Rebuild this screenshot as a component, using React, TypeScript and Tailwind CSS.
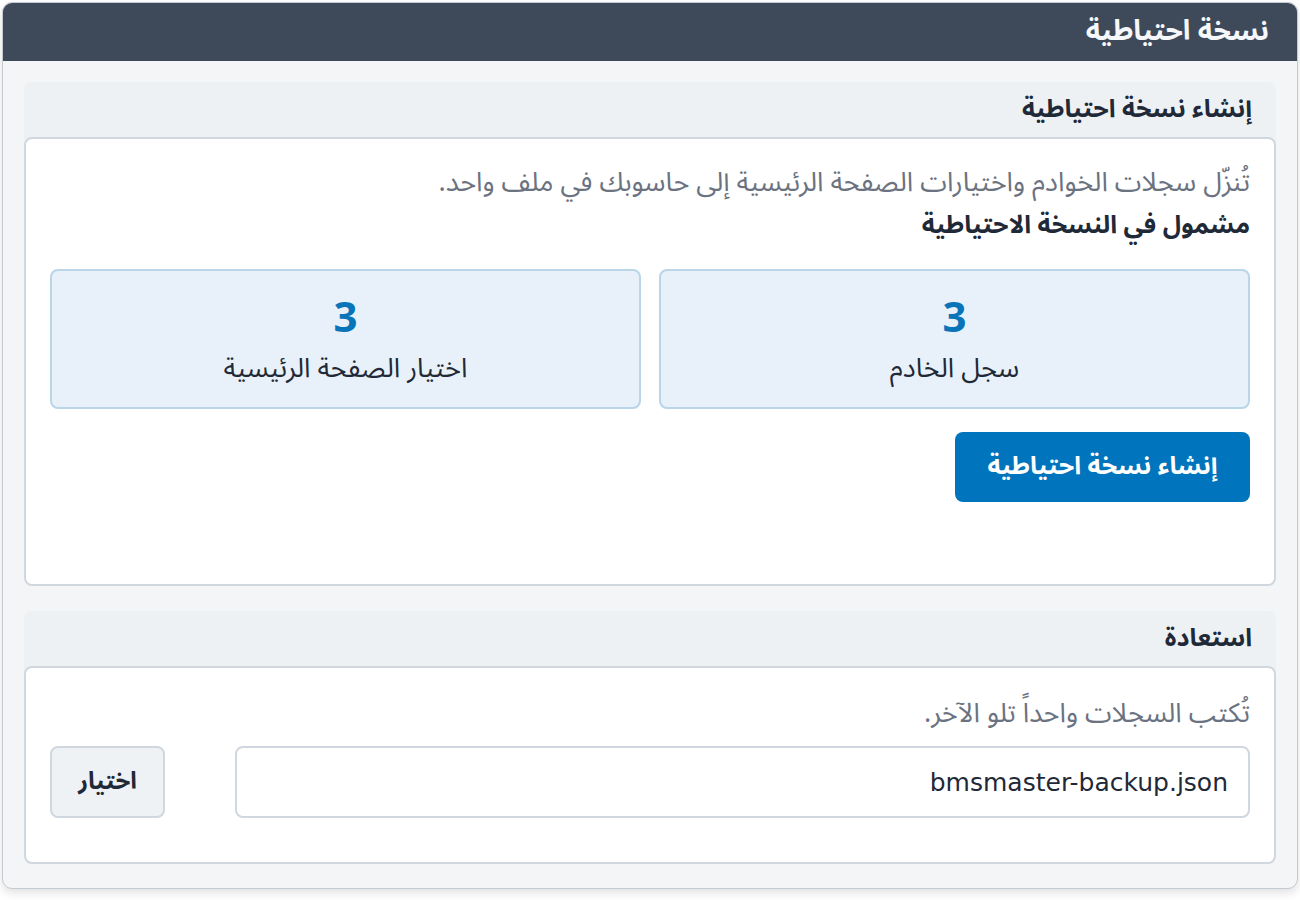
import React from "react";

const font = { fontFamily: '"Noto Sans Arabic", "DejaVu Sans", "Noto Sans", sans-serif' };

function StatCard({ value, label }: { value: number; label: string }) {
  return (
    <div className="flex h-[140px] flex-1 flex-col items-center justify-center rounded-[8px] border-2 border-[#b9d5e8] bg-[#e8f1f9]">
      <div className="mt-[4px] text-[42px] font-bold leading-[50px] text-[#0a74b9]">{value}</div>
      <div className="mt-[6px] text-[27px] leading-[38px] text-[#1f2937]">{label}</div>
    </div>
  );
}

function Section({ title, children, bodyClass }: { title: string; children: React.ReactNode; bodyClass: string }) {
  return (
    <section className="rounded-[8px] bg-[#edf1f4]">
      <div className="flex h-[55px] items-center px-[24px] text-[25px] font-bold text-[#1f2937]">{title}</div>
      <div className={"rounded-[8px] border-2 border-[#d0d7de] bg-white px-[24px] " + bodyClass}>{children}</div>
    </section>
  );
}

export default function App() {
  return (
    <div className="h-[900px] w-[1300px] bg-white px-[2px] pt-[2px]" style={font}>
      <div dir="rtl" className="flex h-[887px] flex-col overflow-hidden rounded-[10px] border border-[#c3cad2] bg-[#f3f5f7] shadow-[0_4px_10px_rgba(0,0,0,0.12)]">
        <header className="flex h-[58px] shrink-0 items-center bg-[#3e4a59] px-[28px] text-[28px] font-bold text-[#f5f7fa]">
          نسخة احتياطية
        </header>
        <div className="flex flex-col gap-[25px] px-[21px] pt-[21px]">
          <Section title="إنشاء نسخة احتياطية" bodyClass="h-[449px] pt-[26px]">
            <p className="text-[27px] leading-[36px] text-[#6b7280]">
              تُنزّل سجلات الخوادم واختيارات الصفحة الرئيسية إلى حاسوبك في ملف واحد.
            </p>
            <h3 className="mt-[7px] text-[25px] font-bold leading-[34px] text-[#1f2937]">مشمول في النسخة الاحتياطية</h3>
            <div className="mt-[27px] flex gap-[18px]">
              <StatCard value={3} label="سجل الخادم" />
              <StatCard value={3} label="اختيار الصفحة الرئيسية" />
            </div>
            <button className="mt-[23px] h-[70px] w-[295px] rounded-[8px] bg-[#0074bc] text-[25px] font-bold text-white">
              إنشاء نسخة احتياطية
            </button>
          </Section>
          <Section title="استعادة" bodyClass="h-[198px] pt-[28px]">
            <p className="text-[27px] leading-[36px] text-[#6b7280]">تُكتب السجلات واحداً تلو الآخر.</p>
            <div className="mt-[14px] flex gap-[70px]">
              <input
                readOnly
                value="bmsmaster-backup.json"
                className="h-[72px] flex-1 rounded-[8px] border-2 border-[#d0d7de] bg-white px-[20px] text-[25px] text-[#1f2937] outline-none"
                style={{ fontFamily: '"DejaVu Sans", "Noto Sans", sans-serif' }}
              />
              <button className="h-[72px] w-[115px] rounded-[8px] border-2 border-[#d0d7de] bg-[#eef2f5] text-[24px] font-bold text-[#1f2937]">
                اختيار
              </button>
            </div>
          </Section>
        </div>
      </div>
    </div>
  );
}
